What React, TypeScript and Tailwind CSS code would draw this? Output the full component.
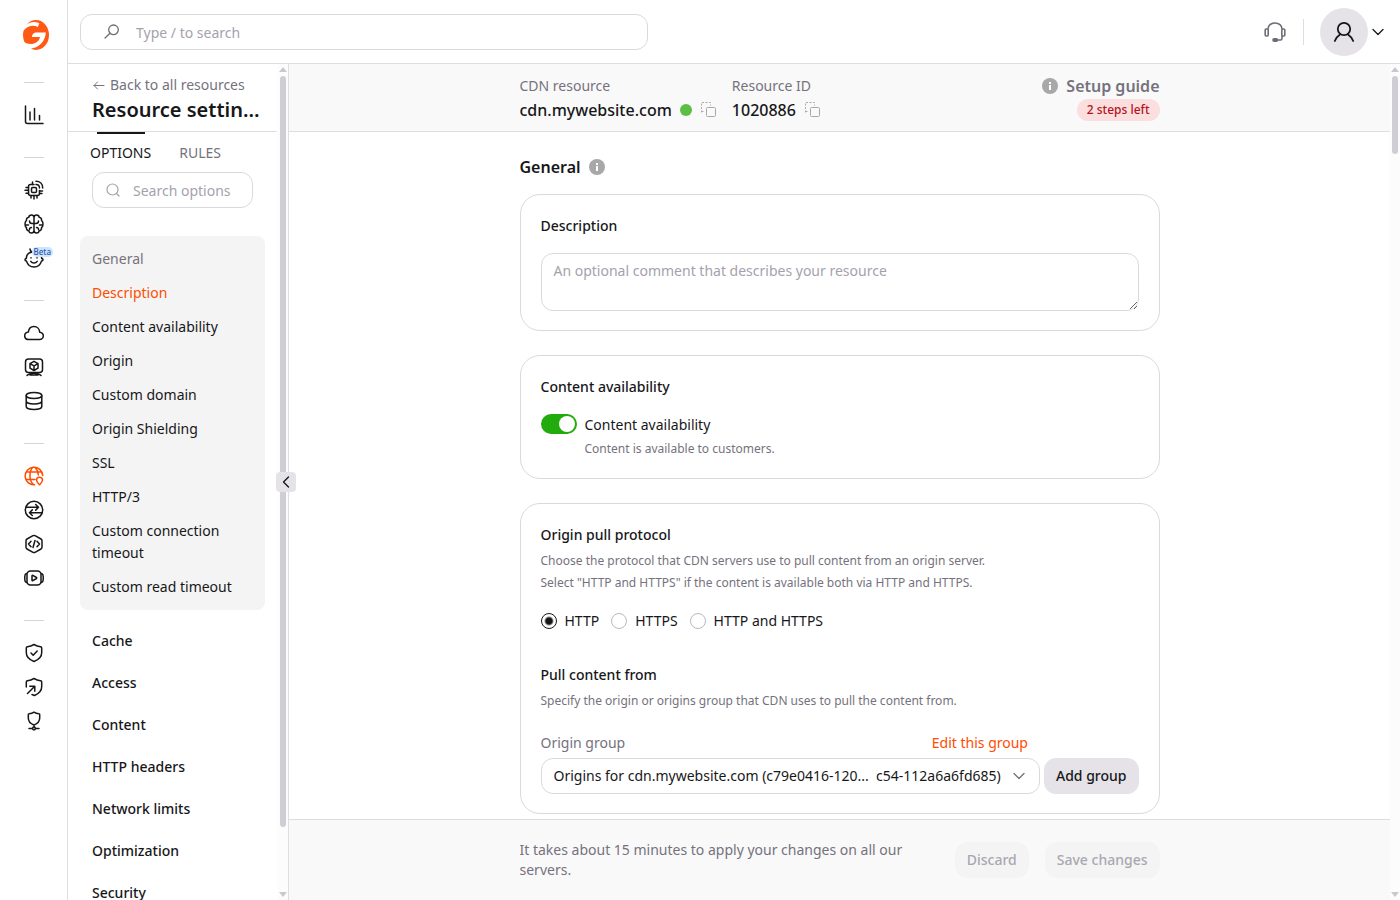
import type { ReactNode } from "react";

const generalLinks = [
  { label: "Description", active: true },
  { label: "Content availability" },
  { label: "Origin" },
  { label: "Custom domain" },
  { label: "Origin Shielding" },
  { label: "SSL" },
  { label: "HTTP/3" },
  { label: "Custom connection timeout" },
  { label: "Custom read timeout" },
];

const sections = [
  "Cache",
  "Access",
  "Content",
  "HTTP headers",
  "Network limits",
  "Optimization",
  "Security",
];

type RailItem = { label: string; icon: ReactNode; active?: boolean; beta?: boolean };

const rail: RailItem[][] = [
  [
    {
      label: "Reports",
      icon: <path d="M1.500 1v15.500a2 2 0 0 0 2 2H19M6 15V7M10.500 15V3.500M15.500 15v-4.500" />,
    },
  ],
  [
    {
      label: "Edge cloud",
      icon: (
        <>
          <path d="M10 4.500H6.500a2 2 0 0 0-2 2v7a2 2 0 0 0 2 2h7a2 2 0 0 0 2-2v-3" />
          <rect x="7.500" y="7.500" width="5" height="5" rx="1.200" />
          <path d="M8.500 4.500V2M4.500 7.500H2M4.500 10.300H1M4.500 13.200H2M7 15.500V18M10 15.500V19M13 15.500V18M15.500 13.500H18M15.500 11h3M12 4.500c2.200 0 3.500 1.300 3.500 3.500M12 1.300c4 0 6.700 2.700 6.700 6.700" />
        </>
      ),
    },
    {
      label: "AI",
      icon: (
        <path d="M10 3.500C10 2 8.800 1 7.400 1 6 1 5 2 4.900 3.200 3.200 3.400 2.200 4.800 2.500 6.300 1.400 7 1 8.200 1 10s.4 3 1.500 3.700c-.3 1.500.7 2.900 2.400 3.100C5 18 6 19 7.400 19c1.400 0 2.600-1 2.600-2.500v-13zM10 3.500C10 2 11.200 1 12.600 1c1.400 0 2.400 1 2.500 2.200 1.700.2 2.700 1.600 2.400 3.100 1.100.7 1.500 1.900 1.500 3.700s-.4 3-1.500 3.700c.3 1.500-.7 2.900-2.400 3.100C15 18 14 19 12.600 19 11.200 19 10 18 10 16.500M10 9.500H8C6.500 9.500 5.500 8.500 5.500 7M10 9.500h2c1.500 0 2.500-1 2.500-2.500M1.500 11h3M15.500 11h3M7.500 13.500c-1.300 0-2 .8-2 2M12.500 13.500c1.300 0 2 .8 2 2" />
      ),
    },
    {
      label: "Gcore assistant",
      beta: true,
      icon: (
        <>
          <path d="M6 1c.2 1.800 1 2.700 2.500 3C5 4.500 2.300 7 2.300 10.500c-.9.100-1.300.6-1.300 1.300s.5 1.200 1.500 1.300C3.500 16.500 6.300 19 10 19s6.500-2.500 7.500-5.900c1-.1 1.500-.6 1.500-1.300s-.4-1.200-1.300-1.300c0-1.300-.3-2.300-.8-3.200" />
          <path d="M6.800 13.300c.8 1.200 1.900 1.700 3.200 1.700s2.400-.5 3.200-1.700M7 9.700v.3M13 9.700v.3" />
        </>
      ),
    },
  ],
  [
    {
      label: "Cloud",
      icon: <path d="M5 16.500h10.500A3.700 3.700 0 0 0 19.300 13c0-2-1.500-3.400-3.600-3.700C15.500 6 13.300 3.500 10 3.500S4.700 5.800 4.400 9C2.200 9.300.7 10.800.7 12.800c0 2.100 1.700 3.700 4.300 3.700z" />,
    },
    {
      label: "Virtual machines",
      icon: (
        <>
          <rect x="1.500" y="2" width="17" height="13.500" rx="3" />
          <path d="M10 4.300l4 2.300v4.600l-4 2.300-4-2.300V6.600zM6 6.600l4 2.200 4-2.200M10 8.800v4.700M3 18.500c1.500-1.700 4-2.300 7-2.300s5.500.6 7 2.300M6 18h8" />
        </>
      ),
    },
    {
      label: "Storage",
      icon: (
        <>
          <ellipse cx="10" cy="4.500" rx="7.800" ry="3" />
          <path d="M2.200 4.500v11c0 1.700 3.500 3 7.800 3s7.800-1.300 7.800-3v-11M2.200 10c0 1.700 3.500 3 7.800 3s7.800-1.300 7.800-3" />
        </>
      ),
    },
  ],
  [
    {
      label: "CDN",
      active: true,
      icon: (
        <>
          <path d="M18.700 9.500A8.800 8.800 0 1 0 10.500 18.800M9 1.300C4.800 5.500 4.800 14.500 9.500 18.500M11 1.300c2 2.200 3.200 5 3.300 7.700M2.500 6h15M1.800 13.500H11" />
          <path d="M15.500 11.200c1.700 0 3 1.200 3 2.900 0 1.900-1.500 3.200-3 4.700-1.500-1.500-3-2.800-3-4.700 0-1.700 1.300-2.900 3-2.900z" />
        </>
      ),
    },
    {
      label: "DNS",
      icon: (
        <>
          <circle cx="10" cy="10" r="8.700" />
          <path d="M2 7.300h12.500M11.700 4.500l2.800 2.800-2.800 2.800M18 12.700H5.500M8.300 9.900l-2.800 2.800 2.800 2.800" />
        </>
      ),
    },
    {
      label: "FastEdge",
      icon: (
        <>
          <path d="M9 1.700a2 2 0 0 1 2 0l6 3.300a2 2 0 0 1 1 1.700v6.600a2 2 0 0 1-1 1.700l-6 3.300a2 2 0 0 1-2 0L3 15a2 2 0 0 1-1-1.700V6.700A2 2 0 0 1 3 5z" />
          <path d="M7 7.300L4.500 10 7 12.700M13 7.300l2.500 2.700-2.500 2.700M11 6.500l-2 7" />
        </>
      ),
    },
    {
      label: "Streaming",
      icon: (
        <>
          <rect x="3" y="3" width="14" height="14" rx="3.500" />
          <path d="M8 7.800v4.400c0 .5.400.7.800.5l3.700-2.200c.4-.3.400-.7 0-1L8.800 7.300c-.4-.2-.8 0-.8.500zM2.500 5.500C1.300 6 .8 7 .8 8.300v3.400c0 1.300.5 2.300 1.700 2.800M17.500 5.500c1.200.5 1.700 1.500 1.700 2.800v3.400c0 1.300-.5 2.300-1.700 2.800" />
        </>
      ),
    },
  ],
  [
    {
      label: "WAAP",
      icon: (
        <>
          <path d="M10 1.500c2.300 1.400 4.500 2 6.500 2.200.7.100 1.200.5 1.200 1.200v4.800c0 4-2.900 6.900-7.700 8.800-4.800-1.900-7.700-4.800-7.700-8.800V4.900c0-.7.500-1.100 1.200-1.200 2-.2 4.200-.8 6.500-2.200z" />
          <path d="M7 10l2.200 2.200 4-4.200" />
        </>
      ),
    },
    {
      label: "DDoS protection",
      icon: (
        <>
          <path d="M2.300 10V4.900c0-.7.500-1.100 1.200-1.200 2-.2 4.200-.8 6.500-2.200 2.300 1.400 4.500 2 6.500 2.200.7.100 1.200.5 1.200 1.200v4.800c0 4-2.900 6.900-7.200 8.800l-2.500-1" />
          <path d="M3.500 16.500l7-7M5.800 9.200h5v5" />
        </>
      ),
    },
    {
      label: "Network protection",
      icon: (
        <>
          <path d="M10 1.200c1.500 1 3.200 1.400 4.900 1.500.5 0 .8.400.8.900V7c0 3.300-2 5.600-5.700 7-3.700-1.400-5.700-3.700-5.700-7V3.600c0-.5.300-.9.800-.9 1.700-.1 3.400-.5 4.900-1.500zM10 14v2M5 17.500h3.500M11.500 17.500H15" />
          <circle cx="10" cy="17.500" r="1.400" />
        </>
      ),
    },
  ],
];

function Logo() {
  return (
    <svg viewBox="0 0 26 30" className="h-[30px] w-[26px]" aria-hidden="true">
      <ellipse cx="13" cy="15" rx="13" ry="15" fill="#ff5913" />
      <path d="M0 9V5h3C7 1.500 12 1.200 16.300 3.200L14.800 7C10.500 4.500 4.500 5.500 0 11z" fill="#fff" />
      <path d="M12.500 12.500h10.300C22.300 20.500 17.500 26.500 9.500 28.300L5 30l-5-3v-6c4 4.500 15.500 4.500 17-4H8.800c.4-2.500 1.700-4.200 3.700-4.500z" fill="#fff" />
    </svg>
  );
}

function Info() {
  return (
    <svg viewBox="0 0 16 16" className="size-4 shrink-0" aria-hidden="true">
      <circle cx="8" cy="8" r="8" fill="#a8a8a8" />
      <path d="M7 4h2v2H7zM7 7h2v5H7z" fill="#fff" />
    </svg>
  );
}

function CopyButton({ label }: { label: string }) {
  return (
    <button type="button" aria-label={label} className="text-[#aaaaaa]">
      <svg viewBox="0 0 16 16" className="size-4" fill="none" stroke="currentColor">
        <rect x="6.500" y="5.500" width="9" height="9" rx="1" />
        <path d="M1.500 10.500V.5h9v3M1.500 9.500h3" strokeDasharray="2 1.500" />
      </svg>
    </button>
  );
}

function ChevronDown({ className }: { className: string }) {
  return (
    <svg viewBox="0 0 12 8" className={className} fill="none" stroke="currentColor" strokeWidth="1.300" strokeLinecap="round" strokeLinejoin="round" aria-hidden="true">
      <path d="M1 1.500l5 5 5-5" />
    </svg>
  );
}

function ScrollTrack({ thumb }: { thumb: string }) {
  return (
    <div aria-hidden="true" className="flex w-[10px] shrink-0 flex-col items-center bg-[#fcfcfc] py-[3px]">
      <div className="border-x-[4px] border-b-[5px] border-x-transparent border-b-[#c9c8cc]" />
      <div className="mt-1 flex min-h-0 w-full flex-1 flex-col items-center">
        <div className={`w-[6px] rounded-full bg-[#d0ced5] ${thumb}`} />
      </div>
      <div className="border-x-[4px] border-t-[5px] border-x-transparent border-t-[#c9c8cc]" />
    </div>
  );
}

function Rail() {
  return (
    <nav aria-label="Products" className="flex w-[68px] shrink-0 flex-col items-center border-r border-[#dedde1] pt-5">
      <a href="#home" aria-label="Home" className="mb-8 pl-1">
        <Logo />
      </a>
      {rail.map((group, i) => (
        <div key={i} className="mb-[25px] flex flex-col items-center">
          <div className="mb-[15px] h-px w-5 bg-[#d5d4d9]" />
          {group.map((item) => (
            <a
              key={item.label}
              href="#product"
              aria-label={item.label}
              className={`relative flex h-[34px] w-10 items-center justify-center ${item.active ? "text-[#ff4c00]" : "text-[#17171a]"}`}
            >
              <svg viewBox="0 0 20 20" className="size-5" fill="none" stroke="currentColor" strokeWidth="1.500" strokeLinecap="round" strokeLinejoin="round">
                {item.icon}
              </svg>
              {item.beta && (
                <span className="absolute top-1.5 left-[18px] rounded-full bg-[#cfe3fb] px-0.5 text-[8px] leading-[10px] font-medium text-[#1d5bb0]">
                  Beta
                </span>
              )}
            </a>
          ))}
        </div>
      ))}
    </nav>
  );
}

function TopBar() {
  return (
    <header className="flex h-16 shrink-0 items-center justify-between border-b border-[#dedde1] pr-4 pl-3">
      <label className="flex h-9 w-full max-w-[568px] items-center rounded-xl border border-[#dad9de] pl-[23px]">
        <svg viewBox="0 0 16 16" className="size-4 shrink-0 text-[#6f6d76]" fill="none" stroke="currentColor" strokeWidth="1.300" strokeLinecap="round">
          <circle cx="9.500" cy="5.800" r="4.800" />
          <path d="M6 9.200L1 14" />
        </svg>
        <input
          type="search"
          aria-label="Search"
          placeholder="Type / to search"
          className="ml-4 min-w-0 flex-1 pt-0.5 pr-3 text-sm outline-none placeholder:text-[#a5a2ad]"
        />
      </label>
      <div className="flex items-center">
        <button type="button" aria-label="Support" className="text-[#6f6d76]">
          <svg viewBox="0 0 22 20" className="h-5 w-[22px]" fill="none" stroke="currentColor" strokeWidth="1.600" strokeLinecap="round" strokeLinejoin="round">
            <rect x="1.200" y="7" width="3" height="7" rx="1" />
            <rect x="17.800" y="7" width="3" height="7" rx="1" />
            <path d="M4 7c0-3.500 3-6 7-6s7 2.500 7 6M18 14v2.500a1.500 1.500 0 0 1-1.500 1.500h-3" />
            <rect x="9" y="16.700" width="4.500" height="2.500" rx="1.200" fill="currentColor" />
          </svg>
        </button>
        <div className="ml-[17px] h-[26px] w-px bg-[#dedde1]" />
        <button type="button" aria-label="Account" className="ml-4 flex items-center gap-1 text-[#17171a]">
          <span className="flex size-12 items-center justify-center rounded-full bg-[#e5e3e8]">
            <svg viewBox="0 0 22 22" className="size-[22px]" fill="none" stroke="currentColor" strokeWidth="1.800" strokeLinecap="round">
              <circle cx="11" cy="8" r="6.200" />
              <path d="M1.800 20c1-2.800 2.700-4.800 5.200-6.500M20.200 20c-1-2.800-2.700-4.800-5.200-6.500" />
            </svg>
          </span>
          <ChevronDown className="h-2 w-3" />
        </button>
      </div>
    </header>
  );
}

function Sidebar() {
  return (
    <aside className="relative flex w-[221px] shrink-0 border-r border-[#dedde1]">
      <div className="flex min-w-0 flex-1 flex-col overflow-hidden pr-px">
        <div className="h-[68px] shrink-0 border-b border-[#dedde1] pt-2.5 pr-4 pl-6">
          <a href="#resources" className="flex items-center gap-1 text-sm leading-[22px] text-[#75727d]">
            <svg viewBox="0 0 14 12" className="h-3 w-3.5" fill="none" stroke="currentColor" strokeLinecap="round" strokeLinejoin="round" aria-hidden="true">
              <path d="M12 6.500H2M5.500 3L2 6.500 5.500 10" />
            </svg>
            Back to all resources
          </a>
          <h1 className="truncate text-xl leading-7 font-semibold">Resource settings</h1>
        </div>
        <div role="tablist" className="flex shrink-0 gap-7 pl-[22px] text-sm leading-[22px]">
          <button type="button" role="tab" aria-selected="true" className="flex flex-col items-center gap-2">
            <span className="h-0.5 w-12 bg-[#17171a]" />
            OPTIONS
          </button>
          <button type="button" role="tab" aria-selected="false" className="pt-2.5 text-[#75727d]">
            RULES
          </button>
        </div>
        <label className="mx-6 mt-2 flex h-9 shrink-0 items-center rounded-xl border border-[#dad9de] pl-3">
          <svg viewBox="0 0 16 16" className="size-4 shrink-0 text-[#a5a2ad]" fill="none" stroke="currentColor" strokeWidth="1.200" strokeLinecap="round">
            <circle cx="7.500" cy="7.500" r="5.500" />
            <path d="M11.500 11.500l2.500 2.500" />
          </svg>
          <input
            type="search"
            aria-label="Search options"
            placeholder="Search options"
            className="ml-3 w-full min-w-0 pt-0.5 text-sm outline-none placeholder:text-[#a5a2ad]"
          />
        </label>
        <nav aria-label="Resource options" className="mt-7 text-sm leading-[22px]">
          <div className="mx-3 flex flex-col gap-3 rounded-lg bg-[#f4f4f4] p-3">
            <h2 className="text-[#75727d]">General</h2>
            {generalLinks.map((link) => (
              <a key={link.label} href="#option" className={link.active ? "text-[#ff4c00]" : ""}>
                {link.label}
              </a>
            ))}
          </div>
          <div className="mt-5 flex flex-col gap-5 pl-6 font-medium">
            {sections.map((section) => (
              <a key={section} href="#section">
                {section}
              </a>
            ))}
          </div>
        </nav>
      </div>
      <ScrollTrack thumb="h-[92%]" />
      <button
        type="button"
        aria-label="Collapse sidebar"
        className="absolute top-1/2 -right-2 flex size-5 -translate-y-1/2 items-center justify-center rounded bg-[#e5e3e8]"
      >
        <svg viewBox="0 0 8 12" className="h-3 w-2" fill="none" stroke="currentColor" strokeWidth="1.400" strokeLinecap="round" strokeLinejoin="round">
          <path d="M6.500 1l-5 5 5 5" />
        </svg>
      </button>
    </aside>
  );
}

function Card({ children }: { children: ReactNode }) {
  return <section className="mb-6 rounded-[20px] border border-[#dad9de] px-5 pt-5 pb-[19px]">{children}</section>;
}

function CardTitle({ children }: { children: ReactNode }) {
  return <h3 className="text-sm leading-[22px] font-medium">{children}</h3>;
}

function ResourceBar() {
  return (
    <div className="h-[68px] shrink-0 border-b border-[#dedde1] bg-[#f9f9f9]">
      <div className="mx-auto flex max-w-[640px] justify-between pt-[11px]">
        <dl className="flex gap-4">
          <div>
            <dt className="text-sm leading-[22px] text-[#75727d]">CDN resource</dt>
            <dd className="flex items-center gap-2 text-base leading-[26px] font-medium">
              cdn.mywebsite.com
              <span className="size-3 rounded-full bg-[#59c045]" />
              <CopyButton label="Copy resource name" />
            </dd>
          </div>
          <div>
            <dt className="text-sm leading-[22px] text-[#75727d]">Resource ID</dt>
            <dd className="flex items-center gap-2 text-base leading-[26px] font-medium">
              1020886
              <CopyButton label="Copy resource ID" />
            </dd>
          </div>
        </dl>
        <div className="flex flex-col items-end">
          <a href="#guide" className="flex items-center gap-2 text-base leading-[22px] font-semibold text-[#75727d]">
            <Info />
            Setup guide
          </a>
          <span className="mt-0.5 rounded-full bg-[#fbdfdf] px-2.5 text-xs leading-[22px] font-medium text-[#b5121b]">2 steps left</span>
        </div>
      </div>
    </div>
  );
}

function OriginCard() {
  return (
    <Card>
      <fieldset>
        <legend className="text-sm leading-[22px] font-medium">Origin pull protocol</legend>
        <p className="mt-1 text-xs leading-[22px] text-[#75727d]">
          Choose the protocol that CDN servers use to pull content from an origin server.
          <br />
          Select "HTTP and HTTPS" if the content is available both via HTTP and HTTPS.
        </p>
        <div className="mt-4 flex gap-3 text-sm leading-[22px]">
          {["HTTP", "HTTPS", "HTTP and HTTPS"].map((protocol) => (
            <label key={protocol} className="flex items-center gap-2">
              <input
                type="radio"
                name="protocol"
                defaultChecked={protocol === "HTTP"}
                className="size-4 appearance-none rounded-full border border-[#bab8c1] checked:border-[#17171a] checked:bg-[radial-gradient(circle,#17171a_3px,transparent_5px)]"
              />
              {protocol}
            </label>
          ))}
        </div>
      </fieldset>
      <div className="mt-8">
        <CardTitle>Pull content from</CardTitle>
        <p className="mt-1 text-xs leading-[22px] text-[#75727d]">
          Specify the origin or origins group that CDN uses to pull the content from.
        </p>
      </div>
      <div className="mt-5 flex items-end gap-1">
        <div className="min-w-0 flex-1">
          <div className="flex justify-between pr-3 text-sm leading-[22px]">
            <label htmlFor="origin-group" className="text-[#75727d]">
              Origin group
            </label>
            <a href="#edit" className="text-[#ff4c00]">
              Edit this group
            </a>
          </div>
          <div className="relative mt-1">
            <select id="origin-group" className="h-9 w-full appearance-none rounded-xl border border-[#dad9de] bg-white pr-8 pl-3 text-sm">
              <option>{"Origins for cdn.mywebsite.com (c79e0416-120...\u00a0 c54-112a6a6fd685)"}</option>
            </select>
            <ChevronDown className="pointer-events-none absolute top-3.5 right-[15px] h-2 w-3 text-[#75727d]" />
          </div>
        </div>
        <button type="button" className="h-9 rounded-xl bg-[#e5e3e8] px-3 text-sm font-medium">
          Add group
        </button>
      </div>
    </Card>
  );
}

export default function App() {
  return (
    <div className="flex h-screen overflow-hidden bg-white font-['Noto_Sans',sans-serif] text-[#17171a]">
      <Rail />
      <div className="flex min-w-0 flex-1 flex-col">
        <TopBar />
        <div className="flex min-h-0 flex-1">
          <Sidebar />
          <main className="flex min-w-0 flex-1 flex-col">
            <ResourceBar />
            <div className="min-h-0 flex-1 overflow-hidden">
              <div className="mx-auto max-w-[640px] pt-6">
                <h2 className="mb-4 flex items-center gap-2 text-base leading-[22px] font-semibold">
                  General
                  <Info />
                </h2>
                <Card>
                  <label htmlFor="description" className="block text-sm leading-[22px] font-medium">
                    Description
                  </label>
                  <textarea
                    id="description"
                    placeholder="An optional comment that describes your resource"
                    className="mt-4 block h-[58px] w-full rounded-xl border border-[#dad9de] px-3 py-1.5 text-sm leading-[22px] outline-none placeholder:text-[#a5a2ad]"
                  />
                </Card>
                <Card>
                  <CardTitle>Content availability</CardTitle>
                  <label className="mt-4 flex gap-2">
                    <input
                      type="checkbox"
                      role="switch"
                      defaultChecked
                      className="h-5 w-9 shrink-0 appearance-none rounded-full bg-[#c4c2ca] p-0.5 before:block before:size-4 before:rounded-full before:bg-white checked:bg-[#22ab0c] checked:before:ml-auto"
                    />
                    <span>
                      <span className="block text-sm leading-[22px]">Content availability</span>
                      <span className="mt-[3px] block text-xs leading-5 text-[#75727d]">Content is available to customers.</span>
                    </span>
                  </label>
                </Card>
                <OriginCard />
              </div>
            </div>
            <footer className="shrink-0 border-t border-[#dedde1] bg-[#f9f9f9] py-5">
              <div className="mx-auto flex max-w-[640px] items-center gap-4">
                <p className="mr-auto w-[400px] text-sm leading-5 text-[#75727d]">
                  It takes about 15 minutes to apply your changes on all our servers.
                </p>
                <button type="button" disabled className="h-9 rounded-xl bg-[#f4f4f4] px-3 text-sm font-medium text-[#aaa7b2]">
                  Discard
                </button>
                <button type="button" disabled className="h-9 rounded-xl bg-[#f4f4f4] px-3 text-sm font-medium text-[#aaa7b2]">
                  Save changes
                </button>
              </div>
            </footer>
          </main>
          <ScrollTrack thumb="h-[78px]" />
        </div>
      </div>
    </div>
  );
}
